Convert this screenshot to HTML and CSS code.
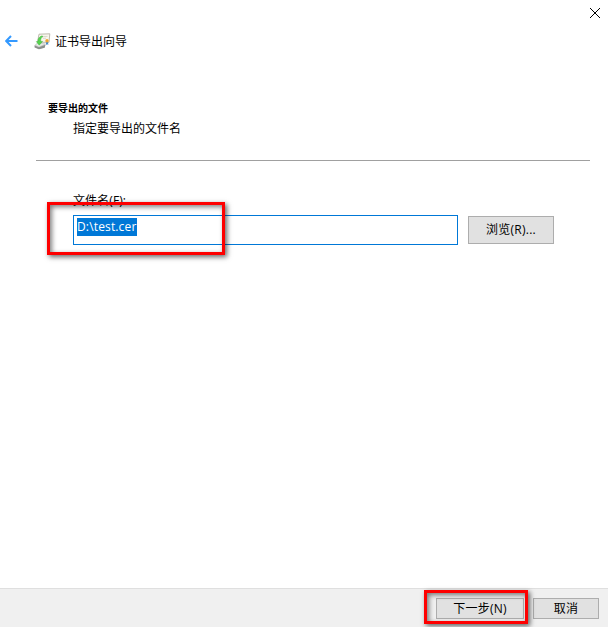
FILE: index.html
```html
<!DOCTYPE html>
<html lang="zh-CN">
<head>
<meta charset="utf-8">
<title>证书导出向导</title>
<link rel="stylesheet" href="styles.css">
</head>
<body>
<div class="wizard">
  <div class="titlebar">
    <svg class="close" width="12" height="12" viewBox="0 0 12 12"><path d="M1 1L11 11M11 1L1 11" stroke="#000" stroke-width="1" fill="none"/></svg>
  </div>
  <header class="header">
    <svg class="back" width="13" height="12" viewBox="0 0 13 12"><path d="M6 1L1.2 6L6 11M1.5 6H12.5" stroke="#3399ff" stroke-width="2" fill="none"/></svg>
    <svg class="cert" width="17" height="17" viewBox="0 0 17 17">
      <path d="M5 1.2L15.8 .8L15 9.3L3.5 9.3Z" fill="#f8f6ed" stroke="#b5b2a5" stroke-width=".9"/>
      <path d="M8.5 3.6L13.5 3.4M9 5.4L12 5.2" stroke="#cbc8bb" stroke-width=".7"/>
      <path d="M.5 12.2L3.5 9.5L11.8 10.5L10.5 14.5L4.8 16.2L.5 14.3Z" fill="#c9cbc8"/>
      <path d="M.7 12.4L5 14.3L11.5 11.8L10.7 14.7L5 16.2L.7 14.4Z" fill="#8b8f8b"/>
      <path d="M1.8 12L4 10.2L10.3 11L5 13.4Z" fill="#e9ebe7"/>
      <path d="M8 2.8C4.9 3.8 3.8 5.8 4 8.4L2.3 8.6L5.2 12.2L8.6 8.4L6.7 8.3C6.5 6.2 7.1 4.6 9 3.6Z" fill="#55d44d" stroke="#35a936" stroke-width=".4"/>
      <path d="M12.2 8.7L11.9 12L13.2 11.2L14.3 12L14 8.7Z" fill="#4589c8"/>
      <circle cx="13" cy="7.7" r="1.7" fill="#efa632"/>
    </svg>
    <span class="title">证书导出向导</span>
  </header>
  <main class="content">
    <h1 class="heading">要导出的文件</h1>
    <p class="subtitle">指定要导出的文件名</p>
    <div class="divider"></div>
    <div class="label">文件名(F):</div>
    <div class="row">
      <div class="field"><span class="selected">D:\test.cer</span><i class="mark mark-file"></i></div>
      <div class="button browse">浏览(R)...</div>
    </div>
  </main>
  <footer class="footer">
    <div class="button next">下一步(N)<i class="mark mark-next"></i></div>
    <div class="button cancel">取消</div>
  </footer>
</div>
</body>
</html>
```
FILE: styles.css
```css
* { box-sizing: border-box; }
body {
  margin: 0;
  background: #fff;
  color: #000;
  font: 12px/16px "Open Sans", "Noto Sans CJK SC", sans-serif;
}
.wizard {
  width: 608px;
  height: 627px;
  display: flex;
  flex-direction: column;
  overflow: hidden;
}
.titlebar {
  height: 28px;
  display: flex;
  justify-content: flex-end;
  padding: 7px 7px 0 0;
}
.header {
  height: 26px;
  display: flex;
  align-items: center;
  padding-left: 5px;
}
.cert { margin-left: 16px; }
.title { margin: 2px 0 0 4px; }
.content {
  flex: 1;
  padding: 46px 18px 0 36px;
}
.heading {
  margin: 0 0 0 12px;
  font-size: 10px;
  line-height: 16px;
  font-weight: 700;
}
.subtitle { margin: 5px 0 0 37px; }
.divider {
  height: 1px;
  margin-top: 23px;
  background: #a0a0a0;
}
.label {
  height: 16px;
  margin: 32px 0 0 37px;
  letter-spacing: .1px;
}
.row {
  display: flex;
  align-items: center;
  gap: 10px;
  margin: 6px 0 0 37px;
}
.field {
  position: relative;
  width: 385px;
  height: 30px;
  border: 1px solid #0078d7;
  padding: 2px 3px;
}
.selected {
  display: block;
  width: 60px;
  height: 18px;
  background: #0078d7;
  color: #fff;
  line-height: 17px;
  font-size: 12px;
  letter-spacing: .15px;
  white-space: nowrap;
}
.button {
  border: 1px solid #adadad;
  background: #e1e1e1;
  display: flex;
  align-items: center;
  justify-content: center;
  letter-spacing: .25px;
  white-space: nowrap;
}
.browse { width: 86px; height: 28px; }
.footer {
  height: 39px;
  border-top: 1px solid #dfdfdf;
  background: #f0f0f0;
  display: flex;
  justify-content: flex-end;
  gap: 9px;
  padding: 9px 9px 0 0;
}
.next { position: relative; width: 88px; height: 21px; }
.cancel { width: 66px; height: 21px; }
.mark {
  position: absolute;
  border: 3px solid #fe0000;
  box-shadow: 2px 2px 5px rgba(0, 0, 0, .6), inset 2px 2px 5px rgba(0, 0, 0, .5);
}
.mark-file { left: -27px; top: -14px; width: 178px; height: 53px; }
.mark-next { left: -13px; top: -9px; width: 104px; height: 34px; }
```
